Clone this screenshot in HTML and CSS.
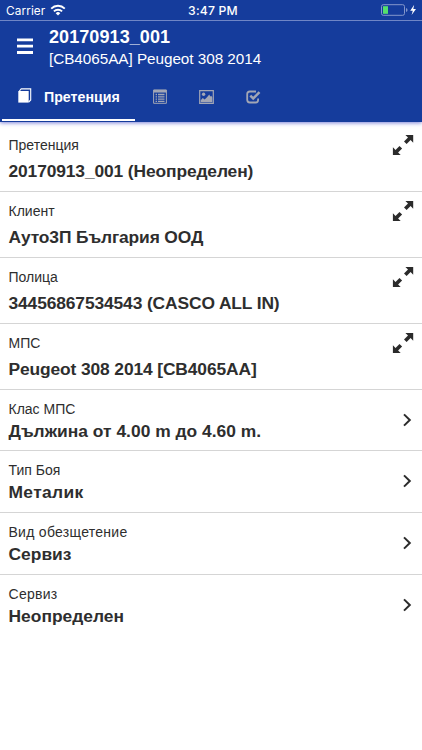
FILE: index.html
```
<!DOCTYPE html>
<html lang="bg">
<head>
<meta charset="utf-8">
<title>20170913_001</title>
<link rel="stylesheet" href="styles.css">
</head>
<body>
<svg class="defs" width="0" height="0" aria-hidden="true">
  <symbol id="expand" viewBox="0 0 22 22">
    <path d="M13.4 .9H21.2V8.7L18.6 6.1L14.6 10.1L12 7.5L16 3.5Z M.9 13.3L3.5 15.9L7.5 11.9L10.1 14.5L6.1 18.5L8.7 21.1H.9Z"/>
  </symbol>
  <symbol id="chevron" viewBox="0 0 10 14">
    <path d="M2 1.4L7.8 7L2 12.6" fill="none" stroke="#2b2b2b" stroke-width="2"/>
  </symbol>
</svg>
<header class="header">
  <div class="status">
    <div class="carrier">Carrier
      <svg class="wifi" width="16" height="12" viewBox="0 0 16 12"><g fill="none" stroke="#fff" stroke-width="1.9"><path d="M1.2 4.6a9.7 9.7 0 0 1 13.6 0"/><path d="M3.9 7.4a5.9 5.9 0 0 1 8.2 0"/></g><path d="M8 11.6L5.7 9.2a3.3 3.3 0 0 1 4.6 0Z" fill="#fff"/></svg>
    </div>
    <div class="time">3:47 PM</div>
    <svg class="battery" width="38" height="13" viewBox="0 0 38 13"><rect x="1.5" y=".7" width="23" height="10.6" rx="1.8" fill="none" stroke="#8497cc"/><rect x="3" y="2.2" width="5" height="7.6" fill="#55e06c"/><path d="M26 4v4q1.6-.5 1.6-2t-1.6-2" fill="#8497cc"/><path d="M34.2 .8L30.2 6.7H32.8L31.6 11.1L36 5.1H33.3Z" fill="#fff"/></svg>
  </div>
  <div class="titlebar">
    <svg class="menu" width="16" height="17" viewBox="0 0 16 17"><path d="M0 1.9H16M0 8.2H16M0 14.5H16" stroke="#fff" stroke-width="2.8"/></svg>
    <div class="titles">
      <h1>20170913_001</h1>
      <p>[CB4065AA] Peugeot 308 2014</p>
    </div>
  </div>
  <nav class="tabs">
    <div class="tab active">
      <svg width="14" height="15" viewBox="0 0 14 15"><path d="M.3 3H10.7V14.6H.3Z" fill="#fff"/><path d="M1.4 3L3.2 .9H12.7V12L10.7 14" fill="none" stroke="#fff" stroke-width="1.1"/></svg>
      <span>Претенция</span>
    </div>
    <div class="tab list">
      <svg width="14" height="15" viewBox="0 0 14 15"><path d="M.6 1H13.4V14.3H.6Z" fill="none" stroke="#a2a6b5"/><path d="M.5 2.2H13.5" stroke="#a2a6b5" stroke-width="2.7"/><path d="M2.6 5.5H4M5 5.5H11.5M2.6 7.8H4M5 7.8H11.5M2.6 10.1H4M5 10.1H11.5M2.6 12.4H4M5 12.4H11.5" stroke="#a2a6b5" stroke-width="1.3"/></svg>
    </div>
    <div class="tab photo">
      <svg width="15" height="14" viewBox="0 0 15 14"><path d="M.7 .7H14.3V13.3H.7Z" fill="none" stroke="#a2a6b5" stroke-width="1.2"/><circle cx="4.6" cy="4.3" r="1.7" fill="#a2a6b5"/><path d="M1.7 12.3V10.2L3.8 8.1L5.6 9.4L8 7.2L10.2 4.5L11.4 6.4L12.3 5.8L13.3 7.5V12.3Z" fill="#a2a6b5"/></svg>
    </div>
    <div class="tab check">
      <svg width="15" height="14" viewBox="0 0 15 14"><path d="M10 1.5H3.8Q1.2 1.5 1.2 4V9.8Q1.2 12.5 3.8 12.5H9.7Q12.1 12.5 12.1 10V8.4" fill="none" stroke="#a2a6b5" stroke-width="1.8"/><path d="M4.3 5.7L7.2 8.5L13.5 2.2" fill="none" stroke="#a2a6b5" stroke-width="2.5"/></svg>
    </div>
  </nav>
</header>
<main class="rows">
  <section class="row"><div><p>Претенция</p><h2>20170913_001 (Неопределен)</h2></div><svg class="expand"><use href="#expand"/></svg></section>
  <section class="row"><div><p>Клиент</p><h2>Ауто3П България ООД</h2></div><svg class="expand"><use href="#expand"/></svg></section>
  <section class="row"><div><p>Полица</p><h2>34456867534543 (CASCO ALL IN)</h2></div><svg class="expand"><use href="#expand"/></svg></section>
  <section class="row"><div><p>МПС</p><h2>Peugeot 308 2014 [CB4065AA]</h2></div><svg class="expand"><use href="#expand"/></svg></section>
  <section class="row small"><div><p>Клас МПС</p><h2>Дължина от 4.00 m до 4.60 m.</h2></div><svg class="chevron"><use href="#chevron"/></svg></section>
  <section class="row small"><div><p>Тип Боя</p><h2 class="wide">Металик</h2></div><svg class="chevron"><use href="#chevron"/></svg></section>
  <section class="row small"><div><p class="wide">Вид обезщетение</p><h2>Сервиз</h2></div><svg class="chevron"><use href="#chevron"/></svg></section>
  <section class="row small last"><div><p class="wide">Сервиз</p><h2>Неопределен</h2></div><svg class="chevron"><use href="#chevron"/></svg></section>
</main>
</body>
</html>
```
FILE: styles.css
```
* { box-sizing: border-box; }
body {
  margin: 0;
  height: 750px;
  overflow: hidden;
  background: #fff;
  color: #2e2e2e;
  font-family: "Liberation Sans", Arial, sans-serif;
}
h1, h2, p { margin: 0; white-space: nowrap; }
.defs { display: block; height: 0; }
.header {
  height: 122px;
  background: #153c9c;
  color: #fff;
  box-shadow: 0 1px 4px rgba(35, 45, 190, .6);
}
.status {
  height: 21px;
  display: grid;
  grid-template-columns: 1fr auto 1fr;
  align-items: center;
  padding: 1px 4px 0 6px;
  border-bottom: 1px solid #6f86c6;
  font-family: Inter, "Liberation Sans", sans-serif;
  font-size: 11.8px;
}
.carrier { display: flex; align-items: center; gap: 5px; letter-spacing: .1px; }
.wifi { margin-top: -2px; }
.time { font-weight: 500; letter-spacing: .2px; font-size: 12.2px; padding-left: 2px; }
.battery { justify-self: end; }
.titlebar { height: 51px; display: flex; padding: 5px 0 0 17px; }
.menu { margin-top: 12px; }
.titles { margin-left: 16px; }
h1 { font-size: 18px; line-height: 22px; letter-spacing: .08px; }
.titles p { font-size: 15.3px; line-height: 20px; margin-top: 1px; letter-spacing: -.05px; }
.tabs { height: 50px; display: flex; padding-left: 2px; }
.tab { display: flex; align-items: center; }
.active {
  width: 133px;
  height: 49px;
  padding-left: 16px;
  gap: 12px;
  border-bottom: 2px solid #fff;
  font-size: 14.2px;
  font-weight: bold;
}
.active span { padding-top: 2px; }
.list { margin-left: 18px; }
.list svg { margin-top: -2px; }
.photo { margin-left: 32px; }
.check { margin-left: 32px; }
.rows { padding-top: 4px; }
.row {
  height: 65.9px;
  padding: 9px 8px 0 8.5px;
  display: flex;
  justify-content: space-between;
  border-bottom: 1px solid #d5d5d5;
}
.row p { font-size: 14px; line-height: 20px; }
h2 { font-size: 17.4px; line-height: 24px; margin-top: 4px; letter-spacing: -.12px; }
.expand { width: 22px; height: 22px; fill: #2b2b2b; margin-top: -1px; }
.small { height: 61.9px; }
.small h2 { margin-top: 0; letter-spacing: .02px; }
.small h2.wide { letter-spacing: .35px; }
.row p.wide { letter-spacing: .28px; }
.chevron { width: 10px; height: 14px; margin: 14px 2px 0 0; }
.last { border-bottom: 0; }
```
